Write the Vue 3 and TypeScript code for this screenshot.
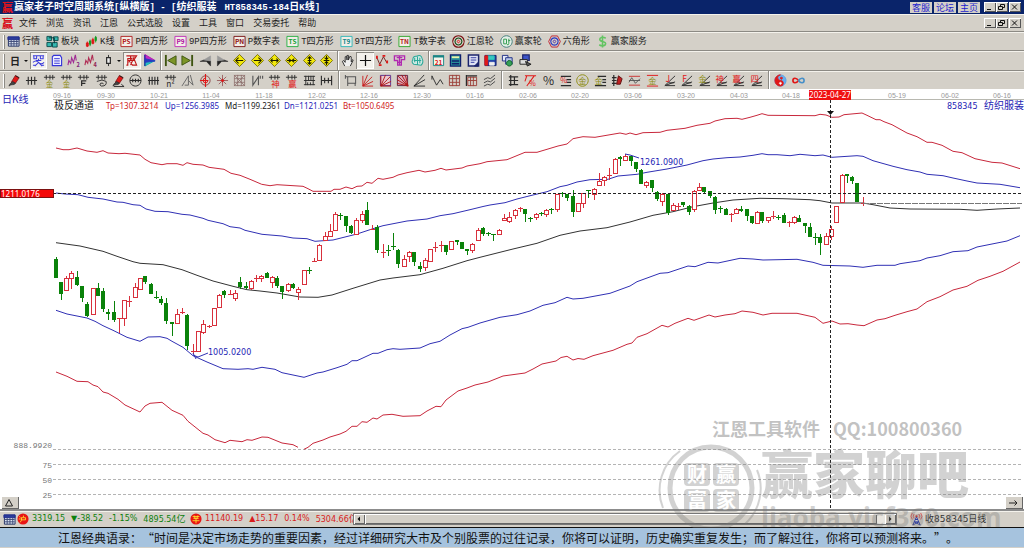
<script setup lang="ts">
import { ref } from 'vue'

interface Shape { d?: string; s?: string; f?: string; w?: number; t?: string; x?: number; y?: number; z?: number }
interface Tool { name: string; g: Shape[]; on?: boolean }

const INK = '#2b2b2b'
const RED = '#e01818'
const OLIVE = '#8c8c10'
const p = (d: string, s = INK, f = 'none', w = 1): Shape => ({ d, s, f, w })
const t = (text: string, x: number, y: number, f: string, z = 8): Shape => ({ t: text, x, y, f, z })
const tool = (name: string, ...g: Shape[]): Tool => ({ name, g })
const pressed = (name: string, ...g: Shape[]): Tool => ({ name, g, on: true })

const ticks = p('M1 3.5H13M3.5 1V6M7.5 1V6M10.5 1V6')
const fan = p('M2 12.5L13 2M2 12.5L13 8.5M3 12.5H13M6 9.5H12', INK)
const pencil = [p('M4 8L8 1.5L12 4L8 10L4 10Z', '#7a1010', RED, 0.8), p('M1 13C2 10 4 9 5 8L8 10C6 13 4 10 1 13', INK, '#444', 0.8), p('M8 2L12 4', '#222')]
const sheet = p('M1.5 2.5H13V12H1.5Z', '#1c2a5e', '#dfe6f2')
const diamond = p('M7 0.5L13.5 7L7 13.5L0.5 7Z', '#77700a', '#f2e80c')
const framed = (a: string, c: string, edge: string): Shape[] => [p('M1 1.5H13V12.5H1Z', edge, '#f2eee8'), t(a, 7, 9.5, c, 7)]

const table: Shape[] = [sheet, p('M1 2H13V5H1Z', '#1c2a8e', '#2b3c9c'), p('M2 7H12.5M2 9.5H12.5M4.5 5V12M7.5 5V12M10.5 5V12', '#3c4a78')]

const menus = ['文件', '浏览', '资讯', '江恩', '公式选股', '设置', '工具', '窗口', '交易委托', '帮助']

const quick: { latin?: string; label: string; g: Shape[] }[] = [
  { label: '行情', g: table },
  { label: '板块', g: [p('M1 1.5H6V6H1ZM8 2H13V6H8ZM1 8H6V12.5H1ZM7 8H12V13H7Z', '#0c4c4c', '#35b8b0'), p('M3 3H9V9', '#073c3c')] },
  { latin: 'K', label: '线', g: [p('M2.5 7V13M8.5 3V10', RED), p('M1.5 8.5H3.5V12H1.5ZM7.5 5H9.5V9H7.5Z', RED, RED), p('M5.5 5V12M11.5 1V8', '#149c24'), p('M4.8 6.5H6.2V10H4.8ZM10.8 2.5H12.2V6H10.8Z', '#149c24', '#149c24')] },
  { latin: 'P', label: '四方形', g: framed('PS', '#b01010', '#b02020') },
  { latin: '9P', label: '四方形', g: framed('P9', '#b010a0', '#c030b8') },
  { latin: 'P', label: '数字表', g: framed('PN', '#8c1010', '#7a1414') },
  { latin: 'T', label: '四方形', g: framed('TS', '#10a030', '#27b043') },
  { latin: '9T', label: '四方形', g: framed('T9', '#128a8a', '#30b8b8') },
  { latin: 'T', label: '数字表', g: framed('TN', '#b02020', '#30a82c') },
  { label: '江恩轮', g: [p('M7 .8A6.2 6.2 0 1 1 6.9 .8Z', '#7c1414', 'none', 1.3), p('M7 3.3A3.7 3.7 0 1 1 6.9 3.3Z', '#164c16', 'none', 1.2), p('M7 5.7A1.3 1.3 0 1 1 6.9 5.7Z', RED)] },
  { label: '赢家轮', g: [p('M7 .8A6.2 6.2 0 1 1 6.9 .8Z', '#3c7c78', '#e6efe9'), p('M4 4.5H7V9.5H4ZM9.5 4V9Q9.5 11 7.5 10.5M9 6H11', '#2a9a48')] },
  { label: '六角形', g: [p('M3.8 1H10.2L13.3 7L10.2 13H3.8L.7 7Z', '#c02030'), p('M7 3A4 4 0 1 1 6.9 3Z', '#2a38c0', 'none', 1.3), p('M7 5.6A1.4 1.4 0 1 1 6.9 5.6Z', '#5030a0')] },
  { label: '赢家服务', g: [p('M10.5 3.5Q7 1.5 4.5 3.5Q3 6 7 7Q11.5 8 10 10.5Q7 12.8 3.5 10.5M7 .5V13.5', '#63c463', 'none', 1.7)] },
]

const viewA: Tool[] = [
  pressed('主图', p('M1 2H13M1 12H4M10 12H13M2 2V5H5V2M9 2V5H12V2M4 7H10M7 5V7M1 9Q4 6 7 9T13 9M3 13L7 9L11 13', '#3c3cdc', 'none', 1.1)),
  tool('列表', p('M4 1.5H11L12.5 4V12.5H2.5V3Z', '#3434d8', '#eef', 1.2), p('M4.5 5H10.5M4.5 7.5H10.5M4.5 10H10.5', '#3434d8')),
  tool('副图2', p('M1 12L2 7L4 10L5 4L7 9L9 1L10 7', '#a02c94', 'none', 1.2), t('2', 12, 13.5, '#802080', 6)),
  tool('副图3', p('M1 12L2 7L4 10L5 4L7 9L9 1L10 7', '#b02c54', 'none', 1.2), t('4', 12, 13.5, '#902050', 6)),
  tool('K线样式', p('M7 1V4M7 10V13'), p('M5 4H9V10H5Z', INK, '#eee', 1.3)),
]
const viewB: Tool[] = [
  pressed('标记', p('M1.5 2H6V5H3V12H1.5M6 2H12.5L10 6L12.5 12H8L6 9M3 7H10M4 9L8 4M10 3L6 12', '#c01818', 'none', 1.2)),
  tool('筹码', p('M2 .5L13 7H2Z', '#b018b0', '#c428c4'), p('M2 7L13 7L2 13Z', '#10b0b0', '#28c0c0'), p('M2 1V13', '#2030a0', 'none', 1.4), p('M2 5L13 7.5L2 9', '#2836c0', '#2836c0')),
]
const arrows = [['左移', 'M11 7H3M6 4L3 7L6 10'], ['右移', 'M3 7H11M8 4L11 7L8 10'], ['放宽', 'M3 7H11M5 5L3 7L5 9M9 5L11 7L9 9'], ['压缩', 'M2 7H12M4 5L6.5 7L4 9M10 5L7.5 7L10 9'], ['拉高', 'M7 3V11M5 5L7 3L9 5M5 9L7 11L9 9M5 7H9'], ['压低', 'M7 2V12M4 7H10M5 4L7 6L9 4M5 10L7 8L9 10']]
const nav: Tool[] = [
  tool('最前', p('M2 1V13', '#3e5410', 'none', 2), p('M13 2V12L4 7Z', '#3e5410', '#7c9426')),
  tool('最后', p('M12 1V13', '#3e5410', 'none', 2), p('M1 2V12L10 7Z', '#3e5410', '#7c9426')),
  tool('前一', p('M12.5 7.5V13L8 8H1L5 6.5Z', '#222', '#222', 0.5), p('M5 6.5L12.5 2V7.5Z', '#999', '#999', 0.5)),
  tool('后一', p('M1.5 7.500V13L6 8H13L9 6.5Z', '#222', '#222', 0.5), p('M9 6.5L1.5 2V7.5Z', '#999', '#999', 0.5)),
  ...arrows.map(([n, d]) => tool(n, diamond, p(d, '#1a1a00', 'none', 1.1))),
]
const modes: Tool[] = [
  tool('拖动', p('M4 13L1.5 8L3 7L4.5 9V3L6 2.5L6.5 6.5V1.5L8 1.5V6.5L9.5 2.5L11 3V8.5L12.5 6L13 7L10 13', INK, '#eee')),
  pressed('十字光标', p('M7 1V13M1 7H13', '#111', 'none', 1.3)),
  tool('波段', p('M1 4L4 11L8 3L12 10', '#702020'), p('M1 5V2M3 12H6M7 2H10M12 10V7', RED, 'none', 2)),
  tool('图层', p('M1.5 2H12.5V6H9V12H5V7H1.5ZM4 4H10M5 9H9M7 2V12', '#b028b0', 'none', 1.4)),
  tool('云图', p('M3 11Q0 9 2 6Q2 2 6 2.5Q11 0 12 5Q14 9 11 12ZM4 4V9M7 3V11M9.5 4V10M3 7H11', '#2ba898', '#cfeae4', 1.1)),
]
const utils: Tool[] = [
  tool('日历', p('M1.5 2.5H12.5V12.5H1.5Z', '#178484', '#f4f4ea'), p('M1 2.5H13', '#178484', 'none', 2.5), t('21', 7, 11.5, RED, 7)),
  tool('计算器', p('M1.5 1H12.5V13H1.5Z', '#10206c', '#278c98', 1.3), p('M3 3.5H11', '#e8f4a8', 'none', 2), p('M3 7.5H11M3 10.5H11', '#10206c', 'none', 1.6)),
  tool('文档', p('M1.5 1H12.5V13H1.5Z', '#1c246c', '#dfe2f4', 1.6), p('M4 4H10M4 6.5H10M4 9H8', '#3038a0'), p('M8 13L12 9V13Z', '#1c246c', '#1c246c')),
  tool('保存', p('M1 1.5H13V12.5H1Z', '#14206c', '#2340a8'), p('M4 2H11V6H4Z', '#28c0b8', '#38c8c0'), p('M1 2H4V12H1Z', RED, RED), p('M6 9H11V12H6Z', '#eee', '#eee')),
  tool('导出', p('M1.5 1.5H7.5V7.5H1.5Z', '#1c2c84', '#e4eaf8'), p('M5 4H12V11H5Z', '#1c2c84', '#b9c8e8'), p('M9 7A3 3 0 1 1 8.9 7Z', '#106028', '#36a058')),
  tool('打印', p('M4 1H11V7H4Z', '#1c246c', '#3c54c8', 1.3), p('M1 6H9V11H1Z', '#222', '#ddd'), p('M7 8L13 11L9 13Z', '#222', '#555')),
]

const drawA: Tool[] = [
  tool('画笔', ...pencil),
  tool('等距线', p('M1 7H13M3.5 3V11.5M7 3V11.5M10.5 3V11.5', INK, 'none', 1.2)),
  tool('黄金线', ticks, t('金', 7, 13.5, OLIVE)),
  tool('黄金段', ticks, t('金', 7, 13.5, OLIVE)),
  tool('斐波线', ticks, p('M5 13V7.5H10M5 10H9', INK, 'none', 1.3)),
  tool('螺旋', ticks, p('M2 8Q8 5 12 8Q13 13 7 13Q4 12 6 10Q9 9 9 11', INK)),
  tool('标注', ...pencil, p('M2 13.5H13M10 11L13 13.5')),
  tool('圆周', p('M7 1A6 6 0 1 1 6.9 1Z'), p('M1 7H13M4 5V9M7 5V9M10 5V9', INK, 'none', 1.2)),
  tool('等分', p('M1 7H13M2.5 3V11.5M5.5 3V11.5M8.5 3V11.5M11.5 3V11.5', INK, 'none', 1.2)),
  tool('平方', ticks, t('n²', 7, 13.5, INK, 9)),
  tool('角度', p('M1 13L8 2V12H4M10 1L13 12L8 7', '#666')),
  tool('圆心', p('M7 2A5 5 0 1 1 6.9 2Z', '#884040'), p('M7 0V14M1 7H10', RED, 'none', 1.2), p('M7 4.5A2.5 2.5 0 1 0 9.5 7', RED)),
  tool('放射', p('M7 1V13M1 7H13M3 3L11 11M11 3L3 11', '#996060'), p('M7 5V9M5 7H9', RED, 'none', 1.3)),
  tool('方阵', p('M1.5 1.5H12.5V12.5H1.5ZM1.5 5H12.5M1.5 9H12.5M5 1V13M9 1V13M1 1L13 13M13 1L1 13', '#8a6a68', 'none', 0.8)),
  tool('周期', p('M2 2V12L8 3V12M10 2V5M12.5 2V5', '#555', 'none', 1.2)),
  tool('神奇线', ticks, t('神', 8, 13.5, RED, 9)),
  tool('赢家线', ticks, t('赢', 8, 13.5, RED, 9)),
  tool('栅格', p('M1 2.5H13M1 7H13M3 2V12M6 2V7M8.5 2V7M11 2V12M1 11.5H13M5 9V12M8 9V12', INK)),
  tool('跨度', p('M1.5 2V12M12.5 2V12M1 7H13M5 4V10M9 4V10', INK, 'none', 1.2)),
]
const rays = 'M2 13L2 2M2 13L7 1M2 13L12 3M2 13L13 8M2 13H13'
const drawB: Tool[] = [
  tool('矩形', p('M4 3H12.5V10H4ZM1 3H4M4 10V13M1.5 1V5M12 10V13', '#555', 'none', 1.1)),
  tool('江恩扇', p(rays, '#c82020')),
  tool('扇形框', p('M1.5 1.5H12.5V12.5H1.5Z', '#5a3090', '#e8c8d0'), p(rays, '#b01818')),
  tool('反扇框', p('M1.5 1.5H12.5V12.5H1.5Z', '#5a2040', '#d8a8b8'), p('M13 13L1 10M13 13L1 6M13 13L2 2M13 13L6 1M13 13L10 1', '#b01818')),
  tool('速度线', p('M1 13L12 1M1 13L13 6M1 13H13')),
  tool('折线', p('M1 2L6 12L10 6L13 11M1 2V6')),
  tool('红格', p('M1.5 1.5H12.5V12.5H1.5ZM1.5 5H12.5M1.5 9H12.5M5 1V13M9 1V13', '#9c4038')),
  tool('黑格', p('M3 3.5H12.5V12.5H3ZM3 7H12.5M6 3V13M9 3V13', '#9c4038'), p('M1.5 1V13M1 2H13', INK, 'none', 1.3)),
  tool('平行线', p('M1 6L5 4L8 5L13 1M1 9.5L5 7.5L8 8.5L13 4.5M1 13L5 11L8 12L13 8', '#444')),
]
const fanOf = (label: string, c: string) => tool(label + '扇', fan, t(label, 5, 8.5, c, 9))
const drawC: Tool[] = [
  tool('阶梯', p('M2 3H12M2 7H12M2 11.5H12M4 1V13M8 3V11', INK, 'none', 1.3)),
  tool('百分Z', p('M1 2H13M3 2L1 8M11 2L3 13', RED, 'none', 1.1), t('%', 9, 12.5, RED, 8)),
  tool('百分比', t('%', 7, 11.5, INK, 13)),
  tool('百分线', p('M2 2.5H13M8 6H13M8 9H13M2 12.5H13', INK, 'none', 1.2), t('%', 5, 10, RED, 8)),
  tool('金圆', p('M7 .8A6.2 6.2 0 1 1 6.9 .8Z', OLIVE), t('金', 7, 10.5, OLIVE, 9)),
  tool('金分割', p('M4 2.5H13M9 6H13M9 9H13M1 12.5H13', INK, 'none', 1.2), t('金', 5, 10.5, OLIVE, 9)),
  tool('刻度笔', p('M3 1V13M1 4H6M1 7H6M1 10H6', INK, 'none', 1.3), p('M8 2L12 5L10 11H6Z', '#5c1010', '#c02020')),
  tool('波浪', p('M1 2.5H13M1 12H13', '#c83030'), p('M1 9L4 4L8 10L13 5M1 7H13', '#555')),
  tool('金横', p('M1 1.5H13M1 13H13', RED), t('金', 7, 11, OLIVE, 9)),
  fanOf('J', RED), fanOf('F', RED), fanOf('金', OLIVE), fanOf('神', RED), fanOf('赢', RED), fanOf('四', RED),
]
const extras: Tool[] = [
  tool('太极', p('M7 1A6 6 0 1 1 6.9 1Z', '#58a0e8', '#66b0f0'), p('M7 1A6 6 0 0 0 7 13A3 3 0 0 0 7 7A3 3 0 0 1 7 1Z', RED, RED), p('M7 8.8A1.2 1.2 0 1 1 6.9 8.8Z', '#fff', '#fff', 0.5), p('M8 3.5A1 1 0 1 1 7.9 3.5Z', RED, RED)),
  tool('无穷', p('M7 7C4.500 3.500 1 4 1 7S4.500 10.500 7 7', RED, 'none', 1.8), p('M7 7C9.500 3.500 13 4 13 7S9.500 10.500 7 7', '#4890c8', 'none', 1.8)),
]
const viewRow = [
  { cls: 'n5', items: viewA }, { cls: 'n2', items: viewB }, { cls: 'n10 cut', items: nav },
  { cls: 'n5 cut', items: modes }, { cls: 'n6 cut', items: utils },
]
const drawRow = [
  { cls: 'n19', items: drawA }, { cls: 'n9 cut', items: drawB }, { cls: 'n15 cut', items: drawC }, { cls: 'n2 cut', items: extras },
]

const dates: [number, string][] = [
  [62, '09-16'], [106, '09-30'], [159, '10-21'], [211, '11-04'], [264, '11-18'], [317, '12-02'], [369, '12-16'], [422, '12-30'],
  [475, '01-16'], [528, '02-06'], [580, '02-20'], [633, '03-06'], [686, '03-20'], [739, '04-03'], [791, '04-18'],
  [897, '05-19'], [950, '06-02'], [1002, '06-16'],
]
const readings = [
  { x: 106, text: 'Tp=1307.3214', c: '#d01c24' }, { x: 165, text: 'Up=1256.3985', c: '#2424b8' },
  { x: 225, text: 'Md=1199.2361', c: '#222' }, { x: 284, text: 'Dn=1121.0251', c: '#2424b8' },
  { x: 343, text: 'Bt=1050.6495', c: '#d01c24' },
]
const levels = [
  { y: 450, text: '888.9920', ty: 448 }, { y: 465, text: '75', ty: 468 }, { y: 480, text: '50', ty: 483 }, { y: 495, text: '25', ty: 498 },
]

const bands = [
  { c: '#c8283c', pts: '56,148 63,149.7 69,149.7 77,148 87,151 97,152.3 103,150.7 108,153 119,153.7 125,153.3 140,155 145,159.3 151,162.7 162,164.7 167,163.7 177,163.7 183,165.3 187,162.7 193,164.3 203,165 209,167.3 224,169.3 231,173.3 240,175.3 250,179.3 261.7,184.3 270,185.7 277,184.7 287,185.3 303,186.3 308,188.7 313,191.3 331,191.3 334,189.3 340,189.3 346,187 352,188.7 357,186.3 362,186 367,182.3 372,183.3 378,178.3 383,179.3 393,177.3 398,175 407,172.7 419,170.3 425,172 435,170.3 441,168.3 446,170 462,168 467,166 480,163.7 487,161.7 507,159.7 525,152.3 537,152.3 558,146 567,144 573,138.7 583,136.7 595,137.3 620,133 626,134.3 630,133 636,134.7 643,132.7 660,132.3 667,130.3 685,128.3 697,125.3 710,123.3 715,121 725,118.7 737,118.3 742,119.3 750,117.3 757,115.3 762,113.7 768,115.3 815,115.7 820,114.3 826,115 832,117.3 839,117 844,114.7 862,113 867,115.3 876,119.7 880,119.7 884,121.7 892,124.7 907,133 917,136.7 927,142.3 932,142.3 942,145.3 953,151.3 962,152.7 975,158.7 992,162.3 1002,163 1020,168.7' },
  { c: '#3030b4', pts: '56,193 65,194 78,194.7 88,197.3 103,199 117,202 123,202.3 133,204.7 140,205.3 146,209 155,211.3 168,211.7 182,214.3 190,215 203,218.3 208,220.3 223,223.7 230,226.7 240,228 245,230.3 262,234.3 282,236 293,238 307,238.7 315,241.3 333,240 357,234 373,228.7 383,225.7 407,221 427,219 440,215.7 453,213.7 470,209.7 483,206.5 490,205 505,202.7 517,199 533,195 547,191.7 560,186.7 567,185.3 577,182 590,179.7 608,179.3 618,176 626,175.3 637,174.3 647,172.3 667,169 687,165 703,160.7 713,159 727,157.7 740,157 753,155.3 762,153.7 768,154.7 777,154.7 790,155.7 800,154.3 815,155.7 823,155 832,157.3 857,155.7 863,156.3 873,160.7 893,166.3 907,169.7 920,172 927,174.3 943,175.7 953,178 967,181 977,183 1000,184.3 1020,187.7' },
  { c: '#333', pts: '56,242.7 80,246 103,251.3 117,256.3 133,261.7 140,263.3 163,264.7 182,269.7 197,275.3 213,281 233,286.3 247,289.7 260,291 277,293 300,297 318,297.3 332,295 353,288.3 380,280 393,278 420,274.7 443,268.3 467,260.7 480,257.3 513,249 537,243.3 560,235.3 580,231 607,227.7 630,222 653,215.3 673,211.7 693,206.7 713,203 733,200 760,198.3 783,198.7 810,199.7 820,200.7 832,203 863,203 873,204.7 890,208 910,209 960,209.3 977,210.3 997,209 1020,208' },
  { c: '#3030b4', pts: '56,310.3 67,314 87,318 95,321.3 103,325.7 113,330.3 127,337.3 140,341.3 148,337 160,336.7 167,338.3 172,341.3 183,347.3 193,355.7 207,362 223,368.7 238,369.3 248,368.7 253,369.3 262,367.3 275,369.3 282,372.7 304,377.3 317,373 323,372 337,367.7 347,364.3 352,360.7 357,360.7 373,353.3 378,353.3 387,349.7 393,348.7 400,349.3 420,348 430,343.7 440,341.3 450,335 462,328.7 468,327.3 480,323 500,317.3 517,314.7 530,311 543,305.3 555,302.7 567,297.3 573,299 583,298.3 610,293.3 630,286 637,281.7 660,273.3 668,272.7 688,266 695,266.7 708,262.3 718,263 740,258.3 753,259 763,260 797,259.3 813,262.3 823,265.3 850,266 863,267.3 877,265.3 895,265.3 900,263.7 920,260.7 927,258 940,255.7 953,251.7 968,250.7 977,247 1007,241 1020,235.7' },
  { c: '#c8283c', pts: '56,372 67,376.3 77,381.3 88,381.7 93,385 98,386.7 103,392 108,393.3 118,399.3 125,405 140,412 145,406 150,403.3 162,402.3 172,410.3 183,415.3 188,421.3 203,433.3 208,435 215,439.7 225,442.7 230,440.3 242,441.7 247,439.7 252,440.3 262,437 268,437.3 282,443 293,444.7 298,447.3' },
  { c: '#c8283c', pts: '304,449.3 308,447.3 313,443.3 323,440 330,437 340,434 346,431.3 352,426.3 357,426.3 362,421.7 367,422.3 373,418 377,419 383,415 392,414.3 403,416.3 420,415.7 427,411 436,406.3 441,406.7 446,400 458,391 467,388 475,385 488,382 503,376 525,373 533,369 542,364 556,361 561,357.5 567,356.3 573,360 578,358.5 584,359.3 593,355.7 613,350.3 627,344.3 632,343 637,337.3 647,333.7 662,325.3 668,327 675,323.3 688,318.3 694,320.3 709,315 715,317 725,315 735,313.7 742,311 753,312.3 763,315 772,313.3 797,313.3 815,317.3 823,323.3 832,321 840,324 848,323.7 857,325 864,325.7 877,320 885,318.7 895,315.3 907,311.7 917,309 927,301.7 940,296.7 953,290 967,286.3 978,280.3 990,276.3 1003,271.3 1020,262' },
]

// One entry per trading day: direction, then high / body top / body bottom / low.
const days = `g257,259,278,278 g282,282,294,300 r276,278,290,290 r271,273,278,289 g271,277,285,286 g286,286,298,302 g302,304,316,317 r288,288,314,314 g283,288,296,296 g288,291,309,312
g309,312,314,320 g301,312,320,322 r318,318,319,333 r300,300,318,326 r296,301,302,307 r283,287,297,297 r278,278,289,290 g276,276,282,284 g283,284,294,294 g291,297,298,299
g296,299,303,305 g298,303,321,324 g322,322,324,336 r309,314,323,323 r308,312,313,314 g314,315,346,350 r344,351,352,354 r331,331,351,351 r320,324,332,334 r325,326,327,328
r308,308,325,325 r294,295,307,308 g290,291,295,298 r290,294,295,295 r290,293,298,301 g277,282,287,289 g282,286,288,289 r280,281,288,290 r275,278,279,282 r275,276,278,282
g272,273,278,278 r276,277,282,288 g276,278,286,288 g286,286,292,299 r283,284,290,292 g283,284,288,289 r287,289,292,300 r270,270,284,284 g267,270,271,274 r258,261,262,262
r244,245,260,260 r232,236,240,240 r224,231,236,237 r212,214,230,230 g213,215,216,220 g216,216,226,232 g225,226,233,234 r218,220,234,235 r211,214,220,223 g202,210,225,225
r225,229,230,230 g225,227,250,253 r244,252,253,258 g245,250,251,256 g233,246,247,250 g249,250,264,268 r255,259,266,266 r251,252,256,262 g252,252,262,266 g262,266,269,272
r258,260,267,271 r249,249,261,261 r242,247,248,252 r241,245,246,252 g245,245,252,255 r241,241,249,249 g240,240,242,245 g242,242,249,249 g249,249,251,255 r243,244,250,253
r228,230,240,240 g227,228,234,236 g232,233,234,236 g234,234,235,241 r229,230,234,234 r214,218,220,220 r212,217,221,223 r209,210,215,219 r207,208,209,212 g209,209,214,222
g217,218,219,222 r213,214,217,220 g212,213,214,216 r209,210,214,217 g208,209,210,214 r194,194,209,212 g192,193,194,197 g194,194,198,201 g190,196,212,217 r203,203,211,211
r193,193,203,208 g190,190,191,198 r188,189,194,200 r173,181,185,185 r176,177,180,186 r168,175,176,180 r158,159,173,173 g156,157,159,166 r154,156,160,161 g155,156,161,166
g162,162,169,172 g169,170,184,184 r181,182,185,188 g180,180,188,192 g191,192,199,201 r193,194,201,206 g194,194,213,215 r203,205,210,210 r203,206,207,210 g202,202,205,207
g205,206,212,215 r190,191,209,212 r183,187,190,190 g187,187,192,193 g191,191,196,198 g196,197,210,214 g206,208,209,213 g208,209,215,215 r213,214,215,222 r208,209,213,213
g206,209,211,212 g209,209,216,221 g216,216,223,224 r211,212,223,224 g212,212,221,223 r217,217,220,223 r211,216,217,219 g215,217,218,220 g213,215,223,223 r221,222,223,227
r216,217,222,224 g215,218,222,222 g223,223,226,233 g223,227,237,237 g233,237,238,245 g234,237,243,255 r233,236,244,245 r226,229,236,240 r206,206,222,223 r174,175,202,203
g174,174,176,183 g176,177,181,184 g183,183,202,202 r197,203,204,206`
const candles = days.split(/\s+/).map((item, i) => {
  const [high, top, bottom, low] = item.slice(1).split(',').map(Number)
  return { up: item[0] === 'r', x: Math.round(53.6 + i * 5.275), high, top, bottom, low }
})

const quote = '江恩经典语录：“时间是决定市场走势的重要因素，经过详细研究大市及个别股票的过往记录，你将可以证明，历史确实重复发生；而了解过往，你将可以预测将来。”。'
const period = ref('日')
</script>

<template>
  <main class="app" lang="zh-CN">
    <header class="title">
      <span class="logo">赢</span>
      <h1>赢家老子时空周期系统<span class="mono">[</span>纵横版<span class="mono">] - [</span>纺织服装<span class="mono gap">HT858345-184</span>日<span class="mono">K</span>线<span class="mono">]</span></h1>
      <nav class="links"><a href="#service">客服</a><a href="#forum">论坛</a><a href="#home">主页</a></nav>
      <div class="win">
        <button aria-label="最小化"><svg viewBox="0 0 11 10"><path d="M3 7.5H7" /></svg></button>
        <button aria-label="还原"><svg viewBox="0 0 11 10"><path d="M4.500 4V2.500H8.500V5.500H7M2.500 4.500H6.500V7.500H2.500Z" /></svg></button>
        <button class="close" aria-label="关闭"><svg viewBox="0 0 11 10"><path d="M3 2.500L8 7.500M8 2.500L3 7.500" /></svg></button>
      </div>
    </header>

    <div class="menubar">
      <span class="logo">赢</span>
      <nav class="menus"><button v-for="m in menus" :key="m">{{ m }}</button></nav>
      <div class="win">
        <button aria-label="最小化子窗口"><svg viewBox="0 0 11 10"><path d="M3 7.5H7" /></svg></button>
        <button aria-label="还原子窗口"><svg viewBox="0 0 11 10"><path d="M4.500 4V2.500H8.500V5.500H7M2.500 4.500H6.500V7.500H2.500Z" /></svg></button>
        <button class="close" aria-label="关闭子窗口"><svg viewBox="0 0 11 10"><path d="M3 2.500L8 7.500M8 2.500L3 7.500" /></svg></button>
      </div>
    </div>

    <div class="bar quick">
      <button v-for="(q, i) in quick" :key="i">
        <svg viewBox="0 0 14 14" class="ico">
          <template v-for="(s, k) in q.g" :key="k">
            <path v-if="s.d" :d="s.d" :stroke="s.s" :fill="s.f" :stroke-width="s.w" />
            <text v-else :x="s.x" :y="s.y" :fill="s.f" :font-size="s.z" text-anchor="middle" font-weight="bold">{{ s.t }}</text>
          </template>
        </svg>
        <span><span v-if="q.latin" class="mono">{{ q.latin }}</span>{{ q.label }}</span>
      </button>
    </div>

    <div class="bar view">
      <button class="period" aria-label="周期">{{ period }}<i class="caret"></i></button>
      <template v-for="(grp, gi) in viewRow" :key="gi">
        <i v-if="gi === 1" class="caret"></i>
        <div class="tools" :class="grp.cls">
          <button v-for="b in grp.items" :key="b.name" :aria-label="b.name" :class="{ on: b.on }">
            <svg viewBox="0 0 14 14" class="ico">
              <template v-for="(s, k) in b.g" :key="k">
                <path v-if="s.d" :d="s.d" :stroke="s.s" :fill="s.f" :stroke-width="s.w" />
                <text v-else :x="s.x" :y="s.y" :fill="s.f" :font-size="s.z" text-anchor="middle" font-weight="bold">{{ s.t }}</text>
              </template>
            </svg>
          </button>
        </div>
      </template>
    </div>

    <div class="bar draw">
      <div v-for="(grp, gi) in drawRow" :key="gi" class="tools" :class="grp.cls">
        <button v-for="b in grp.items" :key="b.name" :aria-label="b.name">
          <svg viewBox="0 0 14 14" class="ico">
            <template v-for="(s, k) in b.g" :key="k">
              <path v-if="s.d" :d="s.d" :stroke="s.s" :fill="s.f" :stroke-width="s.w" />
              <text v-else :x="s.x" :y="s.y" :fill="s.f" :font-size="s.z" text-anchor="middle">{{ s.t }}</text>
            </template>
          </svg>
        </button>
      </div>
    </div>

    <section class="chart">
      <svg viewBox="0 89 1024 420" class="plot">
        <text x="2" y="103" class="blue cjk">日K线</text>
        <text v-for="d in dates" :key="d[1]" :x="d[0]" y="98" class="date">{{ d[1] }}</text>
        <path d="M53 99.500H1024" stroke="#b8b8b0" />
        <rect x="809" y="90" width="42" height="10" fill="#f01010" />
        <text x="830" y="98" class="num mid" fill="#fff">2023-04-27</text>
        <text x="54" y="109" class="cjk" fill="#222">极反通道</text>
        <text v-for="r in readings" :key="r.text" :x="r.x" y="109" class="num" :fill="r.c">{{ r.text }}</text>
        <text x="947" y="109" class="wide blue">858345</text>
        <text x="984" y="109" class="cjk blue">纺织服装</text>

        <g v-for="l in levels" :key="l.text">
          <text x="52" :y="l.ty" class="level">{{ l.text }}</text>
          <path :d="`M53 ${l.y - 0.5}H1022`" stroke="#b4b4b4" stroke-dasharray="3 2" />
        </g>

        <polyline v-for="(b, i) in bands" :key="i" :points="b.pts" fill="none" :stroke="b.c" />

        <g shape-rendering="crispEdges">
          <g v-for="(c, i) in candles" :key="i">
            <rect :x="c.x + 2" :y="c.high" width="1" :height="c.low - c.high" :fill="c.up ? '#d8303c' : '#0a820a'" />
            <rect v-if="c.up && c.bottom - c.top > 1" :x="c.x + 0.5" :y="c.top + 0.5" width="4" :height="c.bottom - c.top" fill="#fff" stroke="#d8303c" />
            <rect v-else :x="c.x" :y="c.top" :width="c.bottom - c.top > 1 ? 4 : 5" :height="c.bottom - c.top" :fill="c.up ? '#d8303c' : '#0a820a'" />
          </g>
        </g>

        <path d="M193 355L198 357L208 353M193 353L196 359M625 154L630 155L639 158" stroke="#3030b4" fill="none" />
        <text x="208" y="355" class="wide blue">1005.0200</text>
        <text x="640" y="165" class="wide blue">1261.0900</text>

        <path d="M53 193.500H1022M830.500 100V509" stroke="#222" stroke-dasharray="3 2" />
        <path d="M863 203.500H1022" stroke="#777" stroke-dasharray="6 1" />
        <path d="M827 111H834L830.500 115Z" fill="#111" />
        <rect x="0.500" y="189.500" width="53" height="8" fill="#f40808" stroke="#7c1010" />
        <text x="1" y="197" class="num" fill="#fff">1211.0176</text>
      </svg>
      <button class="corner left" aria-label="展开"><svg viewBox="0 0 16 12"><path d="M8 2.500L11.500 9H4.500Z" /></svg></button>
      <button class="corner right" aria-label="向右"><svg viewBox="0 0 16 12"><path d="M4 6H12M9.500 3.500L12 6L9.500 8.500" /></svg></button>
    </section>

    <footer class="status">
      <svg viewBox="0 0 14 14" class="ico sheet"><path v-for="(s, k) in table" :key="k" :d="s.d" :stroke="s.s" :fill="s.f" /></svg>
      <svg viewBox="0 0 14 14" class="coin"><circle cx="7" cy="7" r="6.500" fill="#e81414" /><path d="M5 5.500H10V8H5ZM5 5.500V9L3.500 11M7.500 3V5M2.500 4L4 5M2 7H3.500" stroke="#ffe430" fill="none" /></svg>
      <p class="ticker down"><span>3319.15</span><span>▼-38.52</span><span>-1.15%</span><span>4895.54<b>亿</b></span></p>
      <svg viewBox="0 0 14 14" class="coin"><circle cx="7" cy="7" r="6.500" fill="#e81414" /><path d="M3 4H11M4 6.500H10M3 9H11M7 4V12M5 3V6M9 3V6" stroke="#ffe430" fill="none" /></svg>
      <p class="ticker up"><span>11140.19</span><span>▲15.17</span><span>0.14%</span><span>5304.66<b>亿</b></span></p>
      <div class="scroll">
        <button aria-label="向左滚动"><svg viewBox="0 0 10 10"><path d="M6 2.500V7.500L3.500 5Z" /></svg></button>
        <div class="thumb"></div>
        <button aria-label="向右滚动"><svg viewBox="0 0 10 10"><path d="M4 2.500V7.500L6.500 5Z" /></svg></button>
      </div>
      <div class="feed">
        <svg viewBox="0 0 14 14" class="ico"><path d="M7 4L3 13M7 4L11 13M4.500 9.500H9.500M5.500 7H8.500M3 13L9.500 9.500M11 13L4.500 9.500" stroke="#28389c" fill="none" /><path d="M4.500 1Q2.500 3.500 4.500 6M2.500 0Q-.5 3.500 2.500 7M9.500 1Q11.500 3.500 9.500 6M11.500 0Q14.500 3.500 11.500 7" stroke="#e05050" fill="none" /><circle cx="7" cy="3.500" r="1.200" fill="#e02020" /></svg>
        <span>收858345日线</span>
      </div>
    </footer>

    <p class="quote">{{ quote }}</p>

    <svg class="mark" viewBox="654 412 370 116" aria-hidden="true">
      <g fill="#777">
        <text x="712" y="436" font-size="18" font-weight="700" class="strong">江恩工具软件</text>
        <text x="833" y="436" font-size="18" font-weight="700" class="strong">QQ:100800360</text>
        <text x="761" y="494" font-size="52" font-weight="900">赢家聊吧</text>
        <text x="761" y="527" font-size="26" font-weight="700" class="latin">liaoba.yjcf360.com</text>
        <circle cx="711" cy="488" r="41" fill="none" stroke="#777" stroke-width="5" />
        <path d="M663 508A48 48 0 0 1 680 451M757 470A48 48 0 0 1 745 524" fill="none" stroke="#777" stroke-width="2" />
        <rect x="684" y="463" width="26" height="23" rx="4" /><rect x="713" y="463" width="26" height="23" rx="4" />
        <rect x="684" y="489" width="26" height="23" rx="4" /><rect x="713" y="489" width="26" height="23" rx="4" />
      </g>
      <g font-size="20" font-weight="700" fill="#fff">
        <text x="687" y="482">财</text><text x="716" y="482">赢</text>
        <text x="687" y="508">富</text><text x="716" y="508">家</text>
      </g>
    </svg>
  </main>
</template>

<style>
body { margin: 0; background: #d4d0c8; }
</style>

<style scoped>
.app { position: relative; display: flex; flex-direction: column; min-height: 100vh; background: #d4d0c8; color: #222; font: 9px/12px "Noto Sans CJK SC", "Liberation Sans", sans-serif; text-spacing-trim: space-all; }
.app button { font: inherit; color: inherit; background: none; border: 0; padding: 0; margin: 0; white-space: nowrap; }
.mono { font-family: "Liberation Mono", monospace; white-space: pre; }
svg { display: block; }
.ico { width: 13px; height: 13px; flex: none; overflow: visible; }

.title { display: flex; align-items: center; height: 14px; background: #0a246a; color: #fff; padding: 0 3px 0 2px; box-sizing: border-box; }
.logo { width: 12px; color: #d81420; font-size: 11px; font-weight: 900; line-height: 12px; }
.title h1 { margin: 0; font-size: 10px; line-height: 14px; font-weight: 700; white-space: nowrap; }
.title .mono { font-size: 9px; }
.title .gap { margin-left: 8px; }
.links { display: flex; gap: 2px; margin-left: auto; margin-right: 4px; }
.links a { width: 22px; height: 11px; line-height: 11px; text-align: center; background: #d4d0c8; color: #1c1cd0; text-decoration: none; }
.win { display: flex; }
.win button { width: 12px; height: 10px; background: #d4d0c8; box-shadow: inset 1px 1px #fff, inset -1px -1px #555; }
.win .close { margin-left: 1px; }
.win svg { width: 11px; height: 10px; fill: none; stroke: #111; }

.menubar { display: flex; align-items: center; height: 17px; padding: 0 3px 0 2px; box-sizing: border-box; border-top: 1px solid #f4f2ec; }
.menus { display: flex; gap: 9px; margin-left: 5px; }
.menubar .win { margin-left: auto; }

.bar { display: flex; align-items: center; height: 19px; box-sizing: border-box; border-top: 1px solid #8c8a84; box-shadow: inset 0 1px #f4f2ec; padding-left: 6px; }
.bar::before { content: ""; width: 1px; align-self: stretch; margin: 3px 2px 1px -3px; background: #fff; box-shadow: 1px 0 #8c8a84; }
.quick { gap: 6px; }
.quick::before { margin-right: -3px; }
.quick button { display: flex; align-items: center; gap: 2px; }
.view { height: 20px; }
.tools { display: grid; grid-auto-flow: column; grid-auto-columns: 1fr; align-items: center; align-self: stretch; }
.tools button { display: flex; align-items: center; justify-content: center; height: 17px; }
.tools .on { background: #f3f1ec; box-shadow: inset 1px 1px #8c8a84, inset -1px -1px #fff; }
.n2 { width: 35px; }
.n5 { width: 87px; }
.n6 { width: 104px; }
.n9 { width: 156px; }
.n10 { width: 173px; }
.n15 { width: 260px; }
.n19 { width: 329px; }
.cut { margin-left: 3px; padding-left: 3px; border-left: 1px solid #8c8a84; box-shadow: inset 1px 0 #fff; }
.view .cut { margin-left: 2px; padding-left: 1px; }
.app .period { display: flex; align-items: center; gap: 4px; width: 24px; padding-left: 4px; box-sizing: border-box; font-weight: 700; font-size: 10px; }
.caret { width: 0; height: 0; border: 2px solid transparent; border-top-color: #111; border-bottom: 0; }
.view > .caret { margin-right: 2px; }

.chart { position: relative; flex: 1; background: #fff; }
.plot { width: 100%; height: auto; }
.cjk { font-size: 10px; }
.blue { fill: #2424b4; }
.date { font: 7px "Liberation Sans Narrow", "Liberation Sans", sans-serif; fill: #999; text-anchor: middle; }
.num { font: 8px "Noto Sans", sans-serif; }
.mid { text-anchor: middle; }
.wide { font: 8px "DejaVu Sans", sans-serif; }
.level { font: 8px "Liberation Mono", monospace; fill: #777; text-anchor: end; }
.app .corner { position: absolute; bottom: 0; width: 18px; height: 13px; background: #d4d0c8; box-shadow: inset 1px 1px #fff, inset -1px -1px #666; }
.corner svg { width: 16px; height: 12px; fill: none; stroke: #222; }
.left { left: 1px; }
.right { right: 1px; }

.status { display: flex; align-items: center; height: 19px; box-sizing: border-box; border-top: 2px solid #8c8c8c; border-bottom: 1px solid #111; padding-left: 3px; box-shadow: inset 0 1px #f4f2ec; }
.sheet { margin-right: 1px; }
.coin { width: 12px; height: 12px; flex: none; margin-right: 3px; }
.ticker { display: flex; gap: 6px; margin: 0; font: 8px/12px "DejaVu Sans", "Noto Sans CJK SC", sans-serif; white-space: nowrap; }
.ticker b { font-weight: 400; font-size: 9px; }
.down { color: #0c800c; width: 158px; }
.up { color: #d81c1c; width: 148px; overflow: hidden; }
.scroll { display: flex; flex: 1; height: 12px; background: #e8e5df; border: 1px solid #777; box-sizing: border-box; }
.scroll button { width: 11px; background: #d4d0c8; box-shadow: inset 1px 1px #fff, inset -1px -1px #666; }
.scroll svg { width: 10px; height: 10px; fill: #111; }
.thumb { flex: 1; margin-right: 8px; background: #d4d0c8; box-shadow: inset 1px 1px #fff, inset -1px -1px #666; }
.feed { display: flex; align-items: center; gap: 2px; width: 127px; padding-left: 13px; box-sizing: border-box; font-family: "DejaVu Sans", "Noto Sans CJK SC", sans-serif; color: #333; }

.quote { position: relative; z-index: 2; margin: 0; height: 20px; box-sizing: border-box; padding-left: 58px; background: #a6c3de; border-bottom: 1px solid #d4d0c8; color: #111; font-size: 12px; line-height: 19px; white-space: nowrap; overflow: hidden; }
.mark { position: absolute; right: 0; bottom: 20px; width: 370px; height: 116px; opacity: 0.32; pointer-events: none; }
.strong { fill: #444; }
.latin { font-family: "Open Sans", sans-serif; }
</style>
